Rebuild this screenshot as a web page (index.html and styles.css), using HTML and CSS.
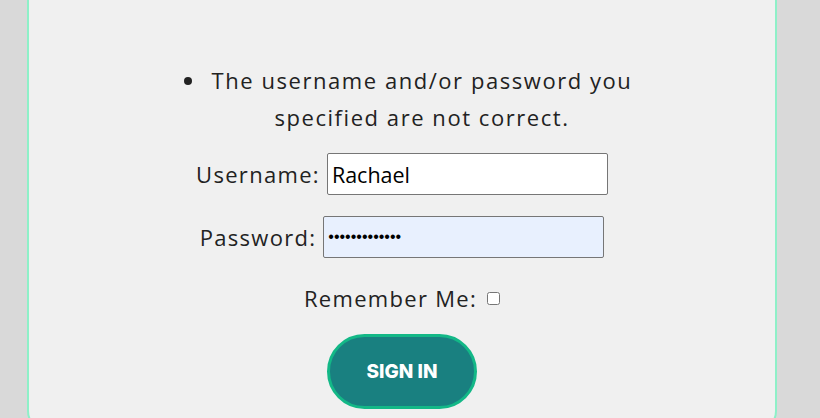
FILE: index.html
```html
<!DOCTYPE html>
<html>
<head>
<meta charset="utf-8">
<link rel="stylesheet" href="styles.css">
</head>
<body>
<main class="card">
  <ul class="errors">
    <li>The username and/or password you specified are not correct.</li>
  </ul>
  <form class="login">
    <div class="row">
      <label class="label" for="u">Username:</label>
      <input class="field" id="u" type="text" value="Rachael">
    </div>
    <div class="row">
      <label class="label" for="p">Password:</label>
      <input class="field field-filled" id="p" type="password" value="Rachael12345!">
    </div>
    <div class="row row-remember">
      <label class="label" for="r">Remember Me:</label>
      <input class="check" id="r" type="checkbox">
    </div>
    <div class="row row-submit">
      <button class="btn" type="button">SIGN IN</button>
    </div>
  </form>
</main>
</body>
</html>
```
FILE: styles.css
```css
html, body {
  margin: 0;
  padding: 0;
  background: #d9d9d9;
  height: 418px;
  overflow: hidden;
}
body {
  font-family: "Open Sans", "Noto Sans", sans-serif;
  color: #222;
}
.card {
  margin: -20px 43px 0 27px;
  padding: 80px 0 20px;
  background: #f0f0f0;
  border: 2px solid #8ef0c8;
  border-radius: 20px;
}
.errors {
  width: 430px;
  margin: 0 auto 17px;
  padding: 0 0 0 40px;
  font-size: 22px;
  line-height: 37px;
  letter-spacing: 1.55px;
  text-align: center;
}
.login {
  display: flex;
  flex-direction: column;
  align-items: center;
  gap: 21px;
}
.row {
  display: flex;
  align-items: center;
  justify-content: center;
  gap: 7px;
}
.label {
  font-size: 22px;
  letter-spacing: 1.3px;
  line-height: 30px;
}
.field {
  box-sizing: border-box;
  width: 281px;
  height: 42px;
  margin: 0;
  padding: 0 4px;
  border: 1px solid #767676;
  border-radius: 2px;
  background: #fff;
  font-family: "Open Sans", sans-serif;
  font-size: 21.5px;
  color: #000;
}
.field-filled {
  background: #e8f0fe;
  font-family: "Liberation Sans", sans-serif;
  font-size: 16px;
}
.row-remember {
  gap: 10px;
  margin-top: 4px;
}
.check {
  width: 13px;
  height: 13px;
  margin: 0;
}
.btn {
  box-sizing: border-box;
  width: 150px;
  height: 75px;
  border: 3px solid #13b887;
  border-radius: 40px;
  background: #198080;
  color: #fff;
  font-family: "Inter", "Roboto", sans-serif;
  font-weight: 800;
  font-size: 19px;
  cursor: pointer;
}
```
